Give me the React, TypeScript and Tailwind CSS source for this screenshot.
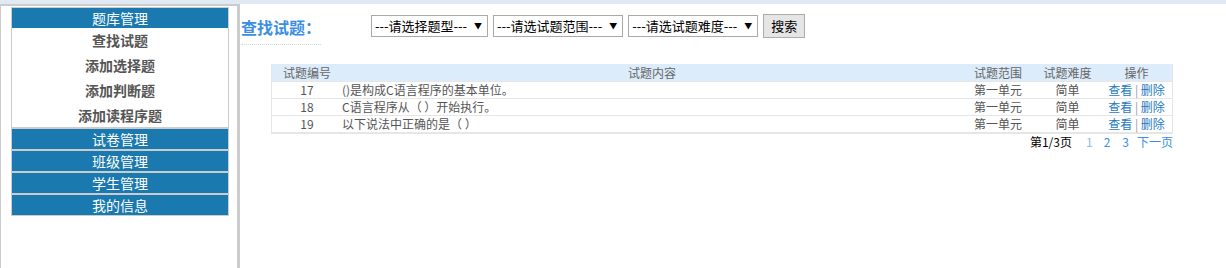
import React from 'react';

const menus = ['试卷管理', '班级管理', '学生管理', '我的信息'];
const subItems = ['查找试题', '添加选择题', '添加判断题', '添加读程序题'];

const rows = [
  { id: 17, content: '()是构成C语言程序的基本单位。', range: '第一单元', level: '简单' },
  { id: 18, content: 'C语言程序从（ ）开始执行。', range: '第一单元', level: '简单' },
  { id: 19, content: '以下说法中正确的是（ ）', range: '第一单元', level: '简单' },
];

const selects = ['---请选择题型---', '---请选试题范围---', '---请选试题难度---'];

const Sidebar = () => (
  <div className="w-[240px] h-[264px] shrink-0 border-t-2 border-l border-r-[3px] border-[#cccccc] pl-[10px] pt-px">
    <div className="w-[218px] border border-[#cccccc]">
      <div className="h-[20px] leading-[20px] bg-[#1a79ae] text-white text-center text-[14px]">题库管理</div>
      {subItems.map((item, i) => (
        <div
          key={item}
          className={`${i === 3 ? 'h-[24px] leading-[24px]' : 'h-[25px] leading-[25px]'} text-center text-[14px] font-semibold text-[#555555]`}
        >
          {item}
        </div>
      ))}
    </div>
    {menus.map((m) => (
      <div key={m} className="w-[218px] border border-[#cccccc] bg-[#1a79ae] h-[22px] leading-[20px] text-white text-center text-[14px]">
        {m}
      </div>
    ))}
  </div>
);

const Select = ({ label }: { label: string }) => (
  <div className="h-[22px] flex items-center border border-[#a9a9a9] bg-white pl-[3px] pr-[5px] text-[13px] text-black leading-[20px]">
    <span>{label}</span>
    <span className="ml-[7px] text-[8px] leading-none">▼</span>
  </div>
);

const App = () => {
  return (
    <div className="w-[1226px] h-[268px] bg-white overflow-hidden font-['Noto_Sans_CJK_SC',sans-serif]">
      <div className="h-[4px] bg-[#dfeaf5]" />
      <div className="flex">
        <Sidebar />
        <div className="flex-1 pl-px">
          {/* search bar */}
          <div className="flex items-start pt-[9px]">
            <div className="w-[80px] h-[32px] border-b border-dotted border-[#d6d6d6] pt-[2px]">
              <span className="text-[16px] font-bold text-[#3b8ee3] leading-[22px]">查找试题：</span>
            </div>
            <div className="flex items-center gap-[5px] ml-[50px] mt-px">
              {selects.map((s) => (
                <Select key={s} label={s} />
              ))}
              <button className="h-[24px] px-[7px] border border-[#adadad] bg-[#e5e5e5] text-[13px] text-black leading-[20px]">
                搜索
              </button>
            </div>
          </div>

          {/* table */}
          <div className="ml-[30px] mt-[19px] w-[902px] text-[12px] leading-[17px]">
            <div className="border-l border-r border-b-2 border-[#e6e6e6]">
              <div className="grid grid-cols-[70px_620px_72px_67px_71px] bg-[#dcecfa] text-[#666666] h-[17px]">
                <div className="text-center">试题编号</div>
                <div className="text-center">试题内容</div>
                <div className="text-center">试题范围</div>
                <div className="text-center">试题难度</div>
                <div className="text-center">操作</div>
              </div>
              {rows.map((r) => (
                <div
                  key={r.id}
                  className="grid grid-cols-[70px_620px_72px_67px_71px] text-[#555555] h-[17px] border-t border-[#e6e6e6] leading-[16px]"
                >
                  <div className="text-center">{r.id}</div>
                  <div>{r.content}</div>
                  <div className="text-center">{r.range}</div>
                  <div className="text-center">{r.level}</div>
                  <div className="text-center">
                    <span className="text-[#1f7bbd]">查看</span>
                    <span className="text-[#999999]"> | </span>
                    <span className="text-[#1f7bbd]">删除</span>
                  </div>
                </div>
              ))}
            </div>
            <div className="flex justify-end items-center leading-[15px]">
              <span className="text-black">第1/3页</span>
              <span className="ml-[14px] text-[#8fbce6]">1</span>
              <span className="ml-[11px] text-[#3b8ee3]">2</span>
              <span className="ml-[12px] text-[#3b8ee3]">3</span>
              <span className="ml-[8px] text-[#3b8ee3]">下一页</span>
            </div>
          </div>
        </div>
      </div>
    </div>
  );
};

export default App;
